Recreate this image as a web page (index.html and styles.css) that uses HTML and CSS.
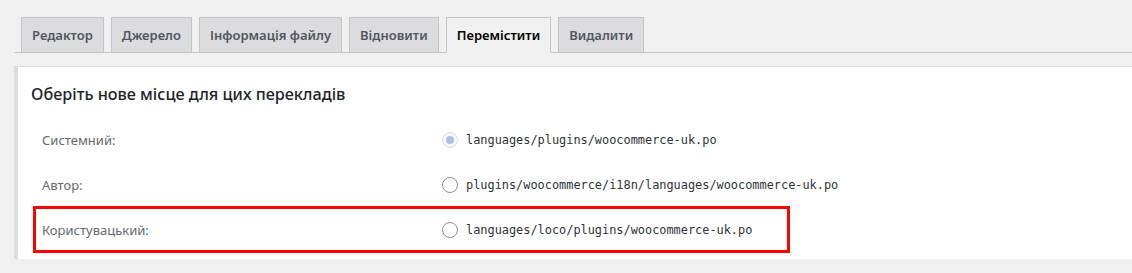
FILE: index.html
```html
<!DOCTYPE html>
<html lang="uk">
<head>
    <meta charset="UTF-8">
    <meta name="viewport" content="width=device-width, initial-scale=1.0">
    <title>Перемістити переклад</title>
    <link rel="stylesheet" href="styles.css">
</head>
<body>
    <nav class="nav-tab-wrapper">
        <a class="nav-tab" href="#">Редактор</a>
        <a class="nav-tab" href="#">Джерело</a>
        <a class="nav-tab" href="#">Інформація файлу</a>
        <a class="nav-tab" href="#">Відновити</a>
        <a class="nav-tab nav-tab-active" href="#">Перемістити</a>
        <a class="nav-tab" href="#">Видалити</a>
    </nav>

    <div class="panel">
        <h2>Оберіть нове місце для цих перекладів</h2>
        <form class="locations">
            <div class="row">
                <span class="row-label">Системний:</span>
                <label class="choice">
                    <input type="radio" name="dest" checked disabled>
                    <code>languages/plugins/woocommerce-uk.po</code>
                </label>
            </div>
            <div class="row">
                <span class="row-label">Автор:</span>
                <label class="choice">
                    <input type="radio" name="dest">
                    <code>plugins/woocommerce/i18n/languages/woocommerce-uk.po</code>
                </label>
            </div>
            <div class="row highlight">
                <span class="row-label">Користувацький:</span>
                <label class="choice">
                    <input type="radio" name="dest">
                    <code>languages/loco/plugins/woocommerce-uk.po</code>
                </label>
            </div>
        </form>
    </div>
</body>
</html>
```

FILE: styles.css
```css
body {
    margin: 0;
    background-color: #f0f0f1;
    color: #3c434a;
    font-family: "Segoe UI", "Noto Sans", sans-serif;
    font-size: 13px;
    overflow: hidden;
}

.nav-tab-wrapper {
    display: flex;
    margin: 0 0 0 14px;
    padding-top: 17px;
    border-bottom: 1px solid #c3c4c7;
}

.nav-tab {
    margin-left: 7px;
    margin-bottom: -1px;
    padding: 5px 10px;
    border: 1px solid #c3c4c7;
    background-color: #dcdcde;
    color: #50575e;
    font-size: 13px;
    font-weight: 600;
    line-height: 24px;
    text-decoration: none;
    white-space: nowrap;
}

.nav-tab-active {
    background-color: #f0f0f1;
    border-bottom-color: #f0f0f1;
    color: #000;
}

.panel {
    margin: 13px -20px 0 14px;
    padding: 12px 12px 9px 12px;
    background-color: #fff;
    border-top: 1px solid #dcdcde;
    border-left: 4px solid #dcdcde;
    box-shadow: 0 1px 1px rgba(0, 0, 0, 0.04);
}

h2 {
    margin: 4px 0 14px 1px;
    color: #1d2327;
    font-size: 16.2px;
    font-weight: 500;
    line-height: 22px;
}

.locations {
    display: flex;
    flex-direction: column;
    gap: 4px;
    margin-left: 6px;
}

.row {
    display: flex;
    align-items: center;
    width: 745px;
    height: 41px;
    padding-left: 6px;
}

.highlight {
    outline: 3px solid #ff0000;
}

.row-label {
    flex: 0 0 400px;
    color: #646970;
}

.choice {
    display: flex;
    align-items: center;
    gap: 8px;
    white-space: nowrap;
}

.choice input {
    appearance: none;
    flex: 0 0 auto;
    width: 16px;
    height: 16px;
    margin: 0;
    border: 1px solid #8c8f94;
    border-radius: 50%;
    background: #fff;
    display: grid;
    place-items: center;
}

.choice input:checked::before {
    content: "";
    width: 8px;
    height: 8px;
    border-radius: 50%;
    background: #a7c4e2;
}

.choice input:disabled {
    border-color: #dcdcde;
    background: #f6f7f7;
}

code {
    font-family: "DejaVu Sans Mono", monospace;
    font-size: 11.9px;
    color: #2c3338;
}
```
